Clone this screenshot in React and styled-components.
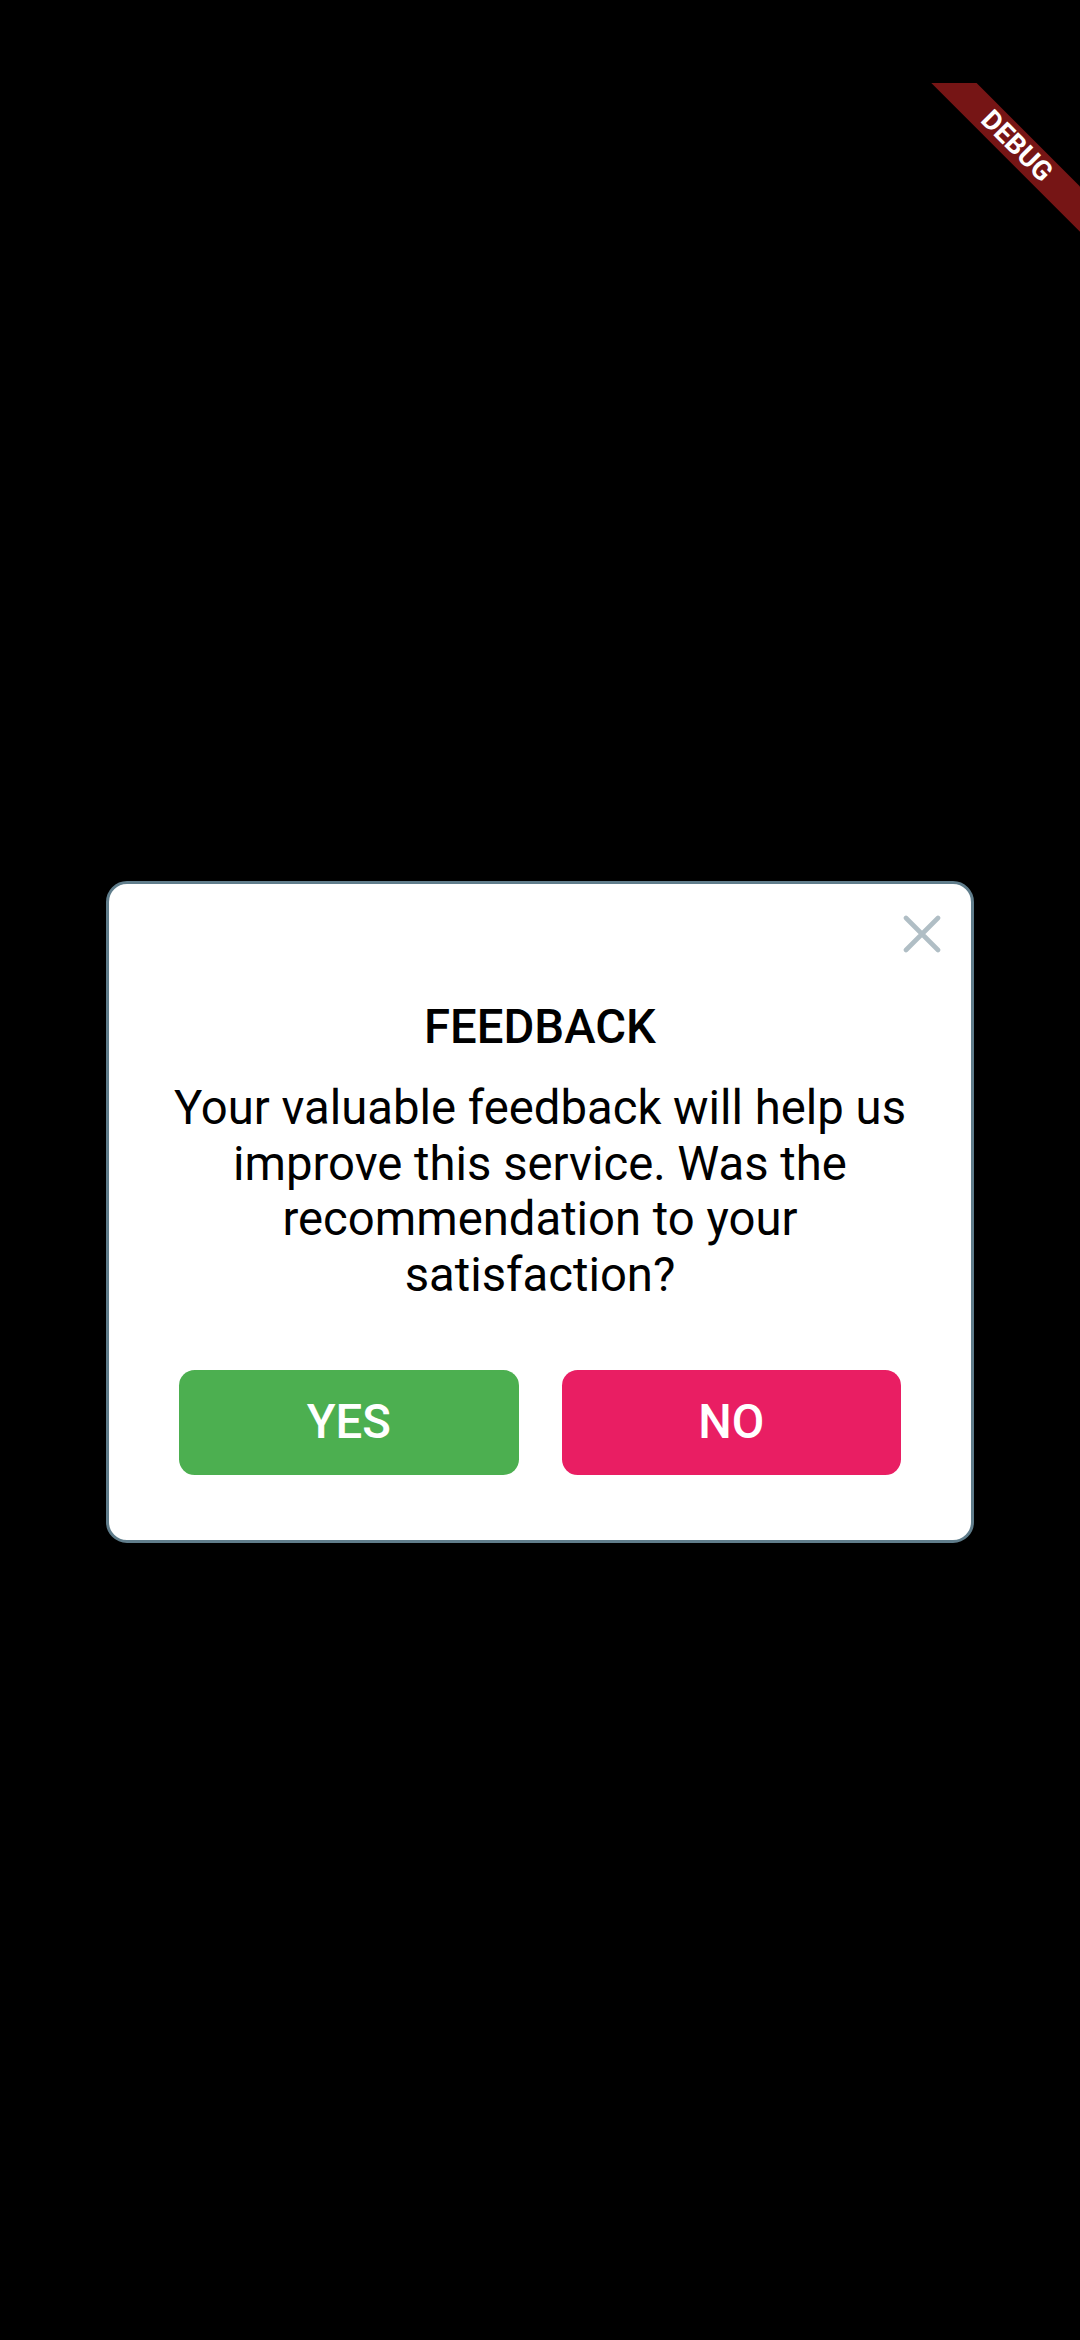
import React from 'react'
import styled, { createGlobalStyle } from 'styled-components'

const GlobalStyle = createGlobalStyle`
  html, body {
    margin: 0;
    padding: 0;
    background: #000;
  }
  body {
    font-family: Roboto, "Noto Sans", "Liberation Sans", sans-serif;
  }
`

const Screen = styled.div`
  position: relative;
  width: 1080px;
  min-height: 2340px;
  background: #000;
  padding-top: 881px;
  box-sizing: border-box;
  overflow: hidden;
`

const Dialog = styled.div`
  width: 868px;
  margin: 0 auto;
  box-sizing: border-box;
  background: #fff;
  border: 3px solid #607d8b;
  border-radius: 21px;
  display: flex;
  flex-direction: column;
  padding-bottom: 65px;
`

const CloseRow = styled.div`
  display: flex;
  justify-content: flex-end;
  padding: 18px 18px 0 0;
`

const CloseButton = styled.button`
  width: 63px;
  height: 63px;
  padding: 0;
  border: none;
  background: transparent;
  display: flex;
  align-items: center;
  justify-content: center;
  cursor: pointer;
`

const Title = styled.h2`
  margin: 35px 0 0;
  font-size: 47.25px;
  line-height: 55.4px;
  font-weight: 500;
  color: #000;
  text-align: center;
`

const Message = styled.p`
  margin: 26px 0 0;
  padding: 0 42px;
  font-size: 47.25px;
  line-height: 55.4px;
  font-weight: 400;
  color: #000;
  text-align: center;
`

const Actions = styled.div`
  display: flex;
  gap: 43px;
  margin-top: 67px;
  padding: 0 70px;
`

const ActionButton = styled.button`
  flex: 1;
  height: 104.5px;
  border: none;
  border-radius: 15.75px;
  background: ${(p) => p.$color};
  color: #fff;
  font-family: Roboto, "Noto Sans", "Liberation Sans", sans-serif;
  font-size: 47.25px;
  font-weight: 500;
  display: flex;
  align-items: center;
  justify-content: center;
  cursor: pointer;
`

const BannerClip = styled.div`
  position: absolute;
  top: 83px;
  right: 0;
  width: 200px;
  height: 200px;
  overflow: hidden;
  pointer-events: none;
`

const BannerBand = styled.div`
  position: absolute;
  left: -13px;
  top: 47px;
  width: 300px;
  height: 31.8px;
  background: #761515;
  transform: rotate(45deg);
  display: flex;
  align-items: center;
  justify-content: center;
  color: #fff;
  font-family: Roboto, "Liberation Sans", sans-serif;
  font-weight: 700;
  font-size: 27.5px;
  line-height: 1;
`

function CloseIcon() {
  return (
    <svg width="38" height="38" viewBox="0 0 38 38">
      <path
        d="M3 3L35 35M35 3L3 35"
        stroke="#b0bec5"
        strokeWidth="4.6"
        strokeLinecap="round"
        fill="none"
      />
    </svg>
  )
}

export default function App() {
  return (
    <>
      <GlobalStyle />
      <Screen>
        <Dialog>
          <CloseRow>
            <CloseButton aria-label="Close">
              <CloseIcon />
            </CloseButton>
          </CloseRow>
          <Title>FEEDBACK</Title>
          <Message>
            Your valuable feedback will help us improve this service. Was the
            recommendation to your satisfaction?
          </Message>
          <Actions>
            <ActionButton $color="#4caf50">YES</ActionButton>
            <ActionButton $color="#e91e63">NO</ActionButton>
          </Actions>
        </Dialog>
        <BannerClip>
          <BannerBand>DEBUG</BannerBand>
        </BannerClip>
      </Screen>
    </>
  )
}
